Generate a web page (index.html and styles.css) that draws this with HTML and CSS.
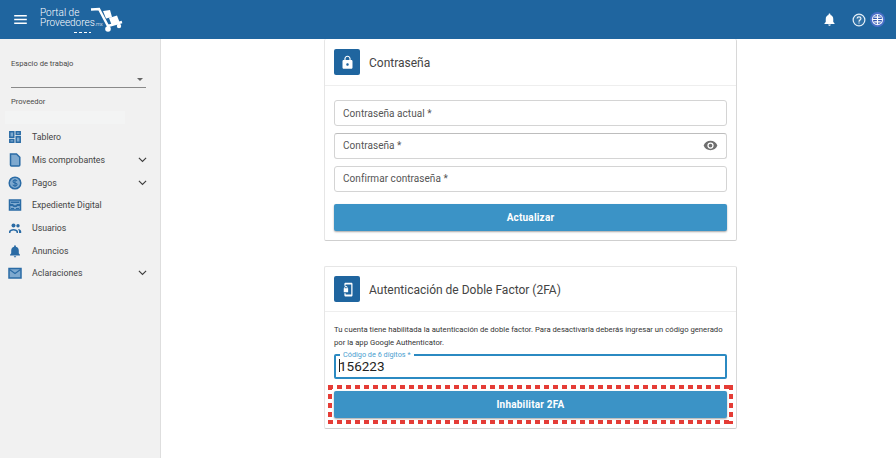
FILE: index.html
```html
<!DOCTYPE html>
<html lang="es">
<head>
<meta charset="utf-8">
<title>Portal de Proveedores</title>
<link rel="stylesheet" href="styles.css">
</head>
<body>
<header class="appbar">
  <svg class="burger" viewBox="0 0 14 10"><path d="M0 0h14v1.6H0zM0 4.2h14v1.6H0zM0 8.4h14V10H0z"/></svg>
  <div class="logo">
    <div class="logo-text"><span>Portal de</span><span>Proveedores<small>.mx</small></span><i class="logo-sub"></i></div>
    <svg class="cart" viewBox="0 0 36 28"><path class="cart-frame" d="M3 4.500l8-.5 9 17 14-4"/><path d="M15 6l7-1 2 7-6 1.500zM21 13l8-2.500 2.500 6.500-8 2.500z"/><circle cx="20" cy="24" r="2.800"/><circle cx="31" cy="21" r="2.200"/></svg>
  </div>
  <div class="spacer"></div>
  <svg class="bell" viewBox="0 0 24 24"><path d="M12 22c1.100 0 2-.9 2-2h-4c0 1.100.9 2 2 2zm6-6v-5c0-3.100-1.600-5.600-4.500-6.300V4c0-.8-.7-1.500-1.500-1.500s-1.500.7-1.500 1.500v.7C7.600 5.400 6 7.900 6 11v5l-2 2v1h16v-1z"/></svg>
  <svg class="help" viewBox="0 0 16 16"><circle cx="8" cy="8" r="6.700"/><path d="M5.800 6.300C5.900 5 6.800 4.300 8 4.300c1.300 0 2.200.8 2.200 1.900 0 1.700-2.200 1.800-2.200 3.700M8 10.800v1.300"/></svg>
  <svg class="globe" viewBox="0 0 16 16"><circle class="g-bg" cx="8" cy="8" r="8"/><circle class="g-ring" cx="8" cy="8" r="6"/><circle class="g-core" cx="8" cy="8" r="4.800"/><path class="g-line" d="M8 3v10M3 8h10M4.500 5.500h7M4.500 10.500h7"/></svg>
</header>
<div class="layout">
  <aside class="sidebar">
    <div class="ws-label">Espacio de trabajo</div>
    <div class="select"><span class="caret"></span></div>
    <div class="prov-label">Proveedor</div>
    <div class="prov-value"></div>
    <nav class="menu">
      <a class="item"><svg class="ico" viewBox="0 0 14 14"><path class="duo" d="M1.800 1.800h4v5.400h-4zM8.200 1.800h4v2.800h-4zM8.200 6.800h4v5.400h-4zM1.800 9.400h4v2.800h-4z"/></svg><span>Tablero</span></a>
      <a class="item"><svg class="ico" viewBox="0 0 14 14"><path class="duo" d="M2.500 1h6l3.300 3.300V12c0 .6-.4 1-1 1H3.500c-.6 0-1-.4-1-1z"/></svg><span>Mis comprobantes</span><svg class="chev" viewBox="0 0 12 8"><path d="M1.200 1.200L6 6l4.800-4.800"/></svg></a>
      <a class="item"><svg class="ico" viewBox="0 0 14 14"><circle class="duo" cx="7" cy="7" r="5.800"/><path class="dollar" d="M9 5.200C8.800 4.400 8 4 7 4c-1.200 0-2 .6-2 1.500C5 7.800 9.100 6.300 9.100 8.600 9.100 9.500 8.200 10 7 10c-1.100 0-1.900-.5-2.100-1.300M7 3v8"/></svg><span>Pagos</span><svg class="chev" viewBox="0 0 12 8"><path d="M1.200 1.200L6 6l4.800-4.800"/></svg></a>
      <a class="item"><svg class="ico" viewBox="0 0 14 14"><path class="duo" d="M1.500 2h11v10h-11z"/><path class="solid" d="M1 6h4l1 1.300h2L9 6h4v2H9.500L8.500 9h-3L4.500 8H1zM3 3.500h8V5H3zM3 10h3v1H3zM8 10h3v1H8z"/></svg><span>Expediente Digital</span></a>
      <a class="item"><svg class="ico" viewBox="0 0 14 14"><circle class="solid" cx="5.500" cy="4.500" r="2"/><circle class="solid" cx="10" cy="4.800" r="1.700"/><path class="solid" d="M1 12v-1.500C1 9 3.500 8 5.500 8S10 9 10 10.500V12H8.500v-1c0-.7-1.600-1.500-3-1.500s-3 .8-3 1.500v1zM10 8c1.600.2 3.200 1 3.200 2.300V12H11v-1.500c0-1-.4-1.800-1-2.500z"/></svg><span>Usuarios</span></a>
      <a class="item"><svg class="ico" viewBox="0 0 24 24"><path class="solid" d="M12 23c1.100 0 2-.9 2-2h-4c0 1.100.9 2 2 2zm6.500-7v-5c0-3.100-1.800-5.600-5-6.300V3.500c0-.8-.7-1.500-1.500-1.500s-1.500.7-1.500 1.500v1.200c-3.200.7-5 3.200-5 6.300v5l-2 2.500v1h17v-1z"/></svg><span>Anuncios</span></a>
      <a class="item"><svg class="ico" viewBox="0 0 14 14"><path class="duo" d="M1 2.500h12v9.500H1z"/><path class="flap" d="M1.500 3.500L7 7.500l5.500-4"/></svg><span>Aclaraciones</span><svg class="chev" viewBox="0 0 12 8"><path d="M1.200 1.200L6 6l4.800-4.800"/></svg></a>
    </nav>
  </aside>
  <main class="content">
    <section class="card card-first">
      <div class="card-head">
        <div class="badge"><svg viewBox="0 0 24 24"><path d="M18 8h-1V6c0-2.800-2.200-5-5-5S7 3.200 7 6v2H6c-1.100 0-2 .9-2 2v10c0 1.100.9 2 2 2h12c1.100 0 2-.9 2-2V10c0-1.100-.9-2-2-2zm-6 9c-1.100 0-2-.9-2-2s.9-2 2-2 2 .9 2 2-.9 2-2 2zm3.100-9H8.900V6c0-1.700 1.400-3.100 3.100-3.100s3.100 1.400 3.100 3.100z"/></svg></div>
        <h2>Contraseña</h2>
      </div>
      <div class="card-body form-one">
        <div class="field">Contraseña actual *</div>
        <div class="field field-eye">Contraseña *<svg class="eye" viewBox="0 0 24 24"><path d="M12 4.500C7 4.500 2.700 7.600 1 12c1.700 4.400 6 7.500 11 7.500s9.300-3.100 11-7.500c-1.700-4.400-6-7.500-11-7.500zM12 17a5 5 0 110-10 5 5 0 010 10zm0-8a3 3 0 100 6 3 3 0 000-6z"/></svg></div>
        <div class="field">Confirmar contraseña *</div>
        <button class="btn btn-update">Actualizar</button>
      </div>
    </section>
    <section class="card card-second">
      <div class="card-head">
        <div class="badge"><svg viewBox="0 0 24 24"><path d="M18 1H9C7.900 1 7 1.900 7 3v3h2V4h9v16H9v-2H7v3c0 1.100.9 2 2 2h9c1.100 0 2-.9 2-2V3c0-1.100-.9-2-2-2z"/><path d="M12 10V9c0-1.400-1-2.500-2.500-2.500S7 7.600 7 9v1H6v6.500h7V10zm-1.200 0H8.200V9c0-.7.600-1.300 1.300-1.300s1.300.6 1.300 1.300z"/></svg></div>
        <h2>Autenticación de Doble Factor (2FA)</h2>
      </div>
      <div class="card-body form-two">
        <p class="note">Tu cuenta tiene habilitada la autenticación de doble factor. Para desactivarla deberás ingresar un código generado por la app Google Authenticator.</p>
        <div class="otp">
          <span class="otp-label">Código de 6 dígitos *</span>
          <span class="caret-bar"></span><span class="otp-value">156223</span>
        </div>
        <div class="highlight">
          <button class="btn">Inhabilitar 2FA</button>
        </div>
      </div>
    </section>
  </main>
</div>
</body>
</html>
```
FILE: styles.css
```css
* { box-sizing: border-box; }
html, body { margin: 0; height: 100%; }
body {
  width: 896px;
  height: 458px;
  overflow: hidden;
  font-family: Roboto, "Liberation Sans", sans-serif;
  background: #fff;
  color: #444;
}
.appbar {
  height: 39px;
  background: #1f659f;
  display: flex;
  align-items: center;
  padding: 0 11px 0 14px;
  position: relative;
  z-index: 2;
}
.burger { width: 13px; height: 9px; fill: #fff; }
.logo { display: flex; align-items: flex-start; margin-left: 13px; margin-top: 1px; }
.logo-text {
  display: flex;
  flex-direction: column;
  width: 48px;
  white-space: nowrap;
  color: #fff;
  font-weight: 300;
  font-size: 10px;
  line-height: 10px;
}
.logo-text small { font-size: 5px; }
.logo-sub {
  display: block;
  width: 17px;
  height: 1px;
  margin: 3px 0 0 34px;
  background: repeating-linear-gradient(90deg, #fff 0 3px, transparent 3px 5px);
}
.cart { width: 36px; height: 28px; fill: #fff; margin-top: -3px; }
.cart .cart-frame { fill: none; stroke: #fff; stroke-width: 2.400; }
.spacer { flex: 1; }
.bell { width: 15px; height: 15px; fill: #fff; margin-right: 15px; }
.help { width: 14px; height: 14px; fill: rgba(255,255,255,.08); stroke: #e4eff7; stroke-width: 1.400; margin-right: 4px; }
.globe { width: 15px; height: 15px; }
.g-bg { fill: #4a6fc8; }
.g-ring { fill: #e8eefa; }
.g-core { fill: #2f55ae; }
.g-line { fill: none; stroke: #fff; stroke-width: 1.300; }

.layout { display: flex; height: 419px; }
.sidebar {
  width: 161px;
  flex: none;
  background: #f1f1f1;
  border-right: 1px solid #dedede;
  padding: 19px 0 0;
  font-size: 7.600px;
  color: #4a4a4a;
}
.ws-label { margin-left: 11px; line-height: 11px; }
.select {
  margin: 0 14px 0 11px;
  height: 19px;
  border-bottom: 1px solid #8a8a8a;
  position: relative;
}
.caret {
  position: absolute;
  right: 3px;
  top: 9px;
  border: 3.500px solid transparent;
  border-top-color: #666;
  border-bottom-width: 0;
}
.prov-label { margin: 8px 0 0 11px; line-height: 11px; }
.prov-value { margin: 4px 35px 0 5px; height: 13px; background: #f3f4f4; }
.menu { margin-top: 2px; display: flex; flex-direction: column; }
.item {
  height: 22.700px;
  display: flex;
  align-items: center;
  padding: 0 13px 0 8px;
  font-size: 8.750px;
  color: #444;
}
.item span { flex: 1; margin-left: 10px; }
.ico { width: 14px; height: 14px; flex: none; fill: #2c6ea8; }
.ico .duo { fill: #7ea9cf; stroke: #2a6ba5; stroke-width: 1.500; }
.ico .solid { fill: #2a6ba5; }
.ico .dollar, .ico .flap { fill: none; stroke: #2a6ba5; stroke-width: 1.100; }
.chev { width: 9px; height: 6px; fill: none; stroke: #3c3c3c; stroke-width: 1.500; flex: none; }

.content { flex: 1; padding-left: 163px; }
.card {
  width: 413px;
  background: #fff;
  border: 1px solid #e6e6e6;
  border-right-color: #d8d8d8;
  border-bottom-color: #cfcfcf;
  border-radius: 2px;
}
.card-first { border-top: 0; height: 202px; }
.card-second { margin-top: 25px; height: 163px; }
.card-head {
  display: flex;
  align-items: center;
  gap: 9px;
  padding: 0 9px;
  border-bottom: 1px solid #eeeeee;
}
.card-first .card-head { height: 47px; }
.card-second .card-head { height: 45px; }
.badge {
  width: 26px;
  height: 26px;
  background: #1f659f;
  border-radius: 2px;
  display: flex;
  align-items: center;
  justify-content: center;
  flex: none;
}
.badge svg { width: 15px; height: 15px; fill: #fff; }
h2 { margin: 0; padding-top: 2px; font-weight: 400; font-size: 12px; color: #444; }
.card-body { padding: 0 9px; }
.form-one { padding-top: 14px; display: flex; flex-direction: column; }
.field {
  height: 26px;
  border: 1px solid #d4d4d4;
  border-radius: 3px;
  padding: 0 8px;
  font-size: 10px;
  color: #555;
  display: flex;
  align-items: center;
  justify-content: space-between;
  margin-bottom: 7px;
  letter-spacing: .05px;
}
.field-eye { border-top-color: #bdbdbd; height: 25.500px; }
.eye { width: 15px; height: 15px; fill: #6f6f6f; }
.btn {
  display: block;
  width: 100%;
  height: 27px;
  border: 0;
  border-radius: 2px;
  background: #3b93c6;
  color: #fff;
  font: 700 10px Roboto, "Liberation Sans", sans-serif;
  box-shadow: 0 1px 2px rgba(0,0,0,.35);
  letter-spacing: .2px;
}
.btn-update { margin-top: 5px; }
.form-two { padding-top: 11px; }
.note { margin: 0; font-size: 7.700px; line-height: 13px; color: #333; }
.otp {
  position: relative;
  height: 25px;
  margin-top: 5px;
  border: 2px solid #2b8ac2;
  border-radius: 2px;
  display: flex;
  align-items: center;
  padding: 0 0 2px 3px;
}
.otp-label {
  position: absolute;
  left: 4px;
  top: -5px;
  background: #fff;
  padding: 0 3px;
  font-size: 7.300px;
  line-height: 8px;
  color: #4ba0d0;
}
.caret-bar { width: 1px; height: 13px; background: #222; margin-right: -1px; }
.otp-value { font-size: 13.500px; color: #222; }
.highlight {
  position: relative;
  margin: 6px -6px 0;
  padding: 6px;
  height: 39px;
  background:
    repeating-linear-gradient(90deg, #e53c36 0 5px, transparent 5px 9px) 0 0 / 100% 4px no-repeat,
    repeating-linear-gradient(90deg, #e53c36 0 5px, transparent 5px 9px) 0 100% / 100% 4px no-repeat,
    repeating-linear-gradient(180deg, #e53c36 0 5px, transparent 5px 9px) 0 0 / 4px 100% no-repeat,
    repeating-linear-gradient(180deg, #e53c36 0 5px, transparent 5px 9px) 100% 0 / 4px 100% no-repeat;
}
```
